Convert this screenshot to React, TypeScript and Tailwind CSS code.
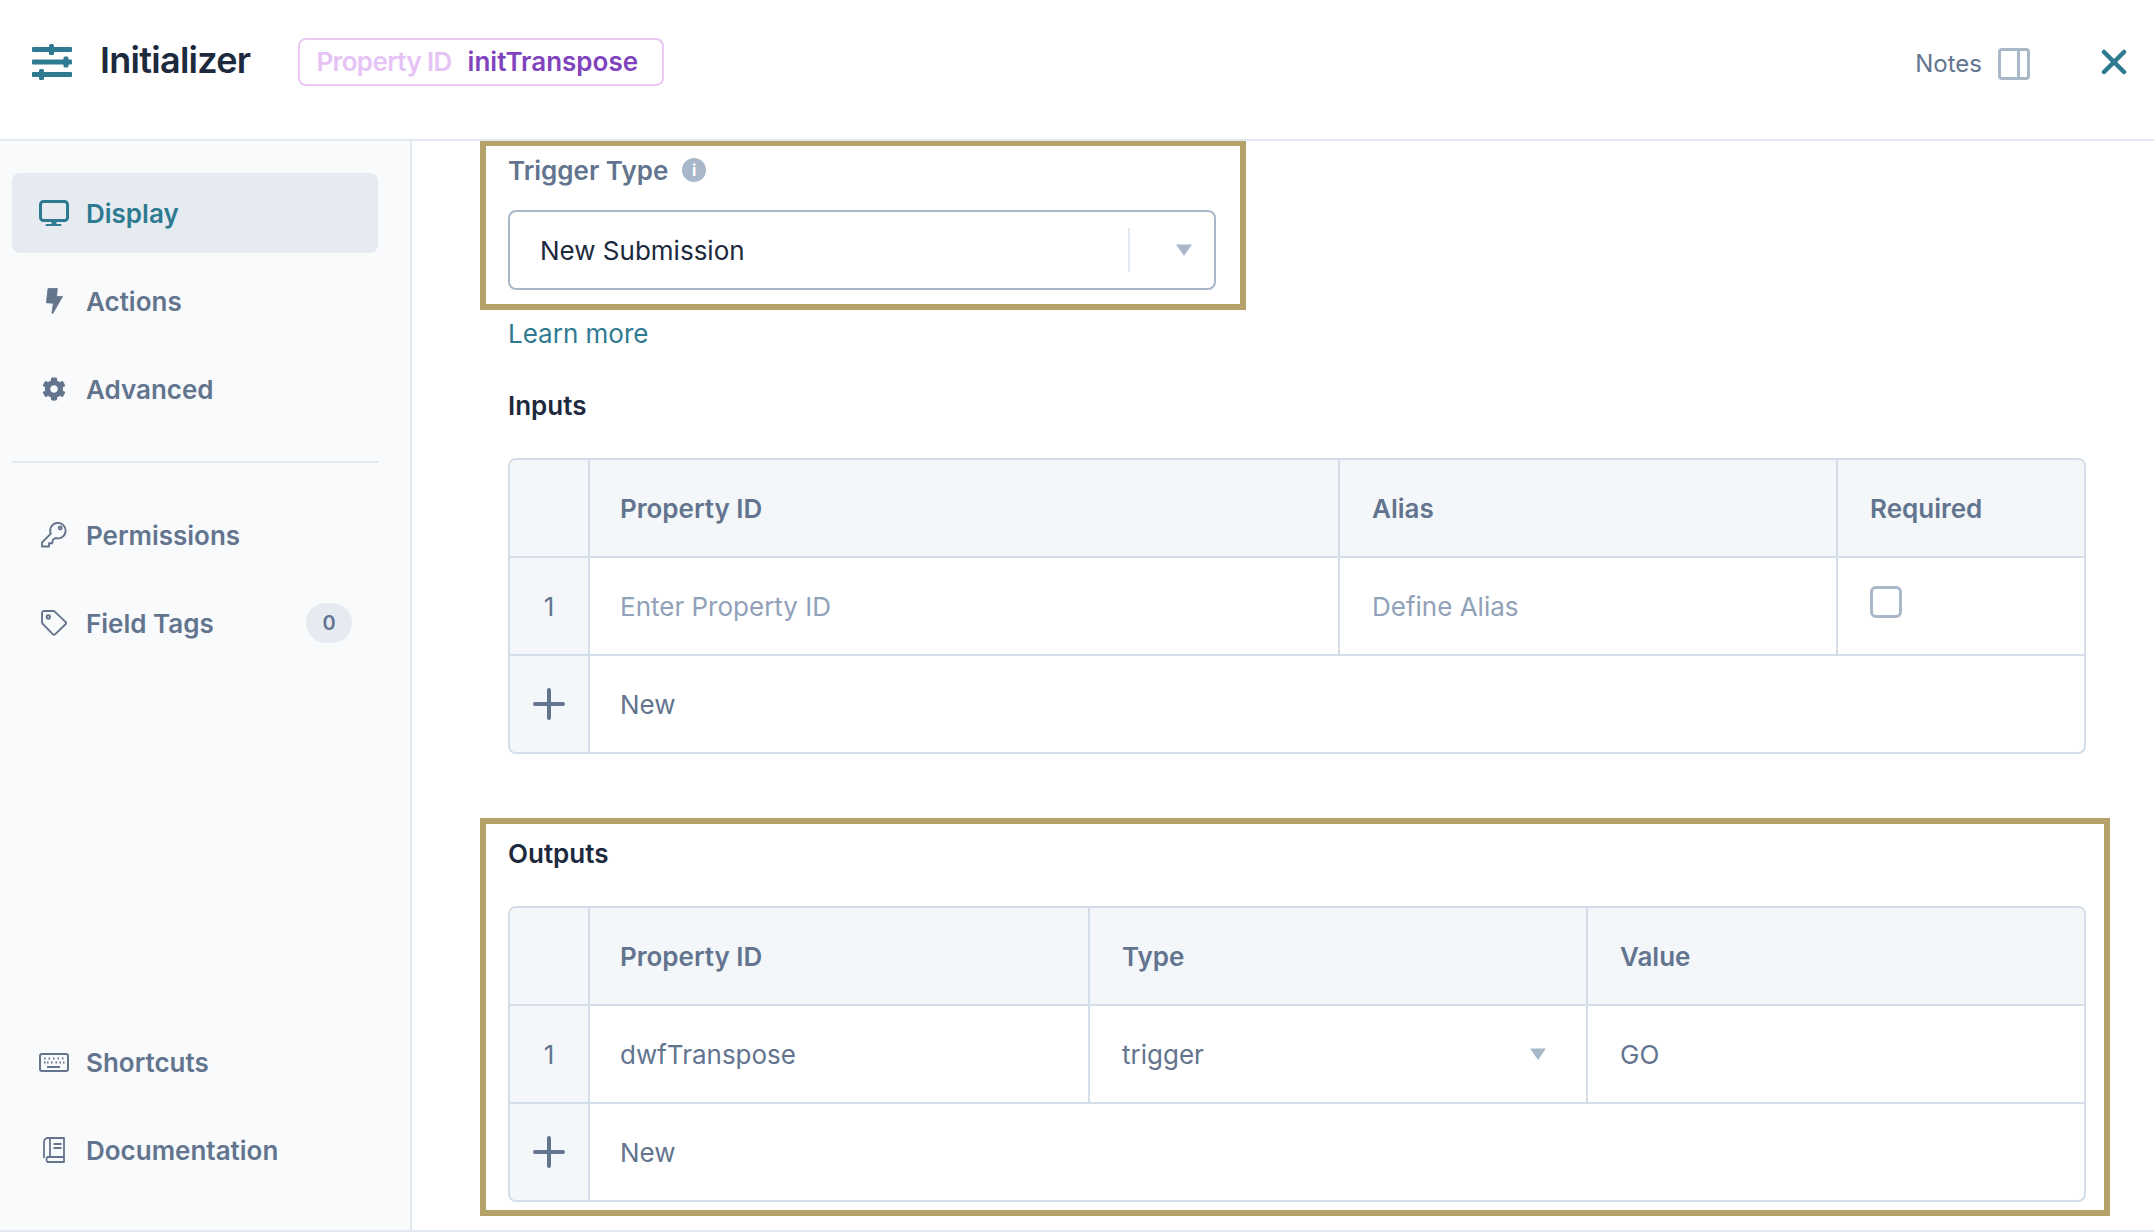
import { FaCog } from "react-icons/fa";
import { Plus, X } from "lucide-react";
import type { ReactNode } from "react";

const slate = "#64748b";
const teal = "#2e7a90";

function Caret() {
  return (
    <svg viewBox="0 0 16 12" className="h-3 w-4 shrink-0" fill="#a8b8c8">
      <path d="M0 .5h16L8 12z" />
    </svg>
  );
}

function Sliders() {
  return (
    <svg viewBox="0 0 40 36" className="h-9 w-10" fill={teal}>
      <rect x="0" y="3" width="40" height="5" rx="1" />
      <rect x="0" y="15.500" width="40" height="5" rx="1" />
      <rect x="0" y="28" width="40" height="5" rx="1" />
      <rect x="17" y="0" width="5" height="11" rx="1.500" />
      <rect x="31.500" y="12.500" width="5" height="11" rx="1.500" />
      <rect x="7" y="25" width="5" height="11" rx="1.500" />
    </svg>
  );
}

function MonitorIcon() {
  return (
    <svg width="30" height="26" viewBox="0 0 30 26" className="shrink-0" fill={teal}>
      <rect x="1.500" y="1.500" width="27" height="19" rx="3" fill="none" stroke={teal} strokeWidth="3" />
      <rect x="12.500" y="21" width="5" height="3" />
      <rect x="6.500" y="24" width="16" height="2" rx="1" />
    </svg>
  );
}

function BoltIcon() {
  return (
    <svg width="17" height="26" viewBox="0 0 17 26" className="shrink-0" fill={slate}>
      <path d="M2 .5h9.300l-.7 8h5.900L6.800 25.500l-.9-.4 1.500-9.800L.4 14.700z" stroke={slate} strokeWidth=".8" strokeLinejoin="round" />
    </svg>
  );
}

function KeyIcon() {
  return (
    <svg width="26" height="26" viewBox="0 0 26 26" className="shrink-0" fill="none" stroke={slate} strokeWidth="1.900" strokeLinejoin="round">
      <path d="M1 20.500 9.800 11.600A7.700 7.700 0 1 1 14.700 16l-2.700 1.500-.8 3.700H8v3.300H1z" />
      <circle cx="19.300" cy="6" r="1.500" />
    </svg>
  );
}

function TagIcon() {
  return (
    <svg width="26" height="26" viewBox="0 0 26 26" className="shrink-0" fill="none" stroke={slate} strokeWidth="1.900" strokeLinejoin="round">
      <path d="M1 3a2 2 0 0 1 2-2h9.500a1.500 1.500 0 0 1 1 .4L25 12.400a1 1 0 0 1 0 1.300L14 24.400a1.500 1.500 0 0 1-2 0L2 14.200a3 3 0 0 1-1-2z" />
      <circle cx="7.300" cy="7" r="1.700" />
    </svg>
  );
}

function KeyboardIcon() {
  return (
    <svg width="30" height="19" viewBox="0 0 30 19" className="shrink-0" fill="none" stroke={slate} strokeWidth="2">
      <rect x="1" y="1" width="28" height="17" rx="2" />
      <path d="M5 5.500h1.500M9.500 5.500H11M14 5.500h1.500M18.500 5.500H20M23 5.500h1.500M5 9.500h1.500M8 9.500h1.500M12 9.500h1.500M16.500 9.500H18M20.500 9.500H22M24 9.500h1.500" />
      <path d="M8 14h13" />
    </svg>
  );
}

function BookIcon() {
  return (
    <svg width="22" height="26" viewBox="0 0 22 26" className="shrink-0" fill="none" stroke={slate} strokeWidth="1.800" strokeLinejoin="round">
      <path d="M21 20V1H5a4 4 0 0 0-4 4v16" />
      <path d="M7 1v19" />
      <path d="M21 20H4.500a3.500 3.500 0 0 0 0 5H21v-5" />
      <path d="M10.500 7h8M10.500 11h8" />
    </svg>
  );
}

function NavItem({ icon, label, active, badge }: { icon: ReactNode; label: string; active?: boolean; badge?: string }) {
  return (
    <div className={`flex h-20 items-center gap-4.5 rounded-lg pl-7 pr-6.5 ${active ? "bg-[#e6ebf2] text-[#2e7a90]" : "text-slate-500"}`}>
      <span className="flex w-7 items-center justify-center">{icon}</span>
      <span className="flex-1 text-[26px] font-semibold">{label}</span>
      {badge && (
        <span className="flex h-10 w-11.5 items-center justify-center rounded-full bg-[#e6ebf2] text-xl font-semibold">{badge}</span>
      )}
    </div>
  );
}

const line = "border-[#d3dee8]";

function Cell({ children, className = "" }: { children?: ReactNode; className?: string }) {
  return <div className={`flex items-center border-r-2 border-[#d3dee8] px-8 last:border-r-0 ${className}`}>{children}</div>;
}

function IndexCell({ children }: { children?: ReactNode }) {
  return (
    <div className="flex items-center justify-center border-r-2 border-[#d3dee8] bg-[#f4f7fa] text-[26px] text-slate-500">{children}</div>
  );
}

function Table({ grid, head, row }: { grid: string; head: string[]; row: ReactNode }) {
  return (
    <div className={`overflow-hidden rounded-lg border-2 text-[26px] text-slate-500 ${line}`}>
      <div className={`box-content h-24 border-b-2 bg-[#f4f7fa] ${line}`}>
        <div className={`grid h-full ${grid}`}>
          <div className={`border-r-2 ${line}`} />
          {head.map((h, i) => (
            <Cell key={h} className={`font-semibold ${i === 0 ? "pl-7.5" : ""}`}>
              {h}
            </Cell>
          ))}
        </div>
      </div>
      <div className={`box-content h-24 border-b-2 ${line}`}>
        <div className={`grid h-full ${grid}`}>
          <IndexCell>1</IndexCell>
          {row}
        </div>
      </div>
      <div className="grid h-24 grid-cols-[80px_1fr]">
        <IndexCell>
          <Plus className="size-12" strokeWidth={2} />
        </IndexCell>
        <div className="flex items-center pl-7.5">New</div>
      </div>
    </div>
  );
}

export default function App() {
  return (
    <div className="flex h-screen flex-col overflow-hidden border-b-2 border-slate-200 bg-white font-['Inter',sans-serif]">
      <header className="flex h-[141px] shrink-0 items-center border-b-2 border-slate-200 pb-4 pl-8 pr-5">
        <Sliders />
        <h1 className="-mt-1 ml-7 text-4xl font-semibold tracking-[-0.02em] text-slate-800">Initializer</h1>
        <div className="ml-12 flex h-12 items-center gap-4 rounded-lg border-2 border-[#e9c8f6] pl-4 pr-6 text-[26px] font-semibold">
          <span className="tracking-tight text-[#e6c3f5]">Property ID</span>
          <span className="text-[#7f43bd]">initTranspose</span>
        </div>
        <div className="ml-auto mt-1 flex items-center gap-4 text-2xl text-slate-500">
          Notes
          <div className="flex size-8 justify-end rounded border-[3px] border-[#a8b8c8]">
            <div className="w-2.5 border-l-[3px] border-[#a8b8c8]" />
          </div>
        </div>
        <X className="ml-16 size-10 text-[#2e7a90]" strokeWidth={2.75} />
      </header>
      <div className="flex min-h-0 flex-1">
        <aside className="flex w-[412px] shrink-0 flex-col gap-2 border-r-2 border-slate-200 bg-slate-50 pb-10 pl-3 pr-8 pt-8">
          <NavItem active icon={<MonitorIcon />} label="Display" />
          <NavItem icon={<BoltIcon />} label="Actions" />
          <NavItem icon={<FaCog className="size-6" />} label="Advanced" />
          <div className="my-6 border-t-2 border-slate-200" />
          <NavItem icon={<KeyIcon />} label="Permissions" />
          <NavItem icon={<TagIcon />} label="Field Tags" badge="0" />
          <div className="flex-1" />
          <NavItem icon={<KeyboardIcon />} label="Shortcuts" />
          <NavItem icon={<BookIcon />} label="Documentation" />
        </aside>
        <main className="flex-1 overflow-hidden pl-24 pr-17">
          <section className="-ml-7 -mt-px w-[766px] border-6 border-[#b4a269] pb-3.5 pl-5.5 pr-6 pt-2">
            <div className="mb-6 flex h-8 items-center gap-3.5 text-[26px] font-semibold text-slate-500">
              Trigger Type
              <span className="flex size-6 items-center justify-center rounded-full bg-[#a8b8c8] text-base font-bold text-white">i</span>
            </div>
            <div className="flex h-20 items-center rounded-lg border-2 border-[#a8b8c8] pl-7.5 text-[26px] text-slate-800">
              <span className="flex-1">New Submission</span>
              <div className="h-11 border-l-2 border-slate-200" />
              <div className="flex w-21 justify-center pl-6">
                <Caret />
              </div>
            </div>
          </section>
          <a className="mt-2 block h-8 text-[26px] leading-8 text-[#2e7a90]">Learn more</a>
          <h2 className="mb-9 mt-10 h-8 text-[26px] font-semibold leading-8 text-slate-800">Inputs</h2>
          <Table
            grid="grid-cols-[80px_750px_498px_1fr]"
            head={["Property ID", "Alias", "Required"]}
            row={
              <>
                <Cell className="pl-7.5 text-slate-400">Enter Property ID</Cell>
                <Cell className="text-slate-400">Define Alias</Cell>
                <Cell>
                  <div className="-mt-2 size-8 rounded-md border-[3px] border-[#a8b8c8]" />
                </Cell>
              </>
            }
          />
          <section className="-ml-7 -mr-6 mt-16 border-6 border-[#b4a269] pb-2 pl-5.5 pr-4.5 pt-3.5">
            <h2 className="mb-9 h-8 text-[26px] font-semibold leading-8 text-slate-800">Outputs</h2>
            <Table
              grid="grid-cols-[80px_500px_498px_1fr]"
              head={["Property ID", "Type", "Value"]}
              row={
                <>
                  <Cell className="pl-7.5">dwfTranspose</Cell>
                  <Cell className="justify-between pr-10">
                    trigger
                    <Caret />
                  </Cell>
                  <Cell>GO</Cell>
                </>
              }
            />
          </section>
        </main>
      </div>
    </div>
  );
}
